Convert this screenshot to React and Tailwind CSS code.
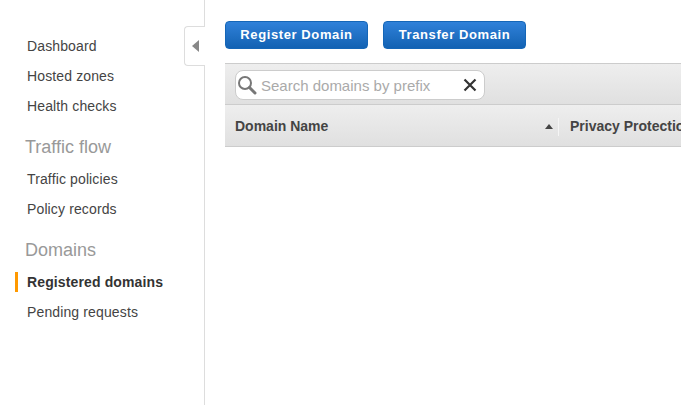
const NAV_TOP = ['Dashboard', 'Hosted zones', 'Health checks'];
const NAV_FLOW = ['Traffic policies', 'Policy records'];

function NavItem({ label, active }) {
  if (active) {
    return (
      <div className="h-[30px] flex items-center">
        <div className="w-[3px] h-[20px] bg-[#f90] ml-[15px] mr-[9px]" />
        <span className="font-bold text-[#333] tracking-[0.13px]">{label}</span>
      </div>
    );
  }
  return <div className="h-[30px] flex items-center pl-[27px] text-[#444] tracking-[0.13px]">{label}</div>;
}

function SectionTitle({ children }) {
  return <div className="h-[30px] flex items-center pl-[25px] text-[18px] text-[#999]">{children}</div>;
}

function DomainButton({ children }) {
  return (
    <button className="w-[143px] h-[28px] rounded-[4px] border border-[#1566b7] bg-gradient-to-b from-[#2f81d9] to-[#1262b3] text-white font-bold text-[13px] tracking-[0.6px] flex items-center justify-center">
      {children}
    </button>
  );
}

export default function App() {
  return (
    <div className="relative flex w-[681px] h-[405px] overflow-hidden bg-white text-[14px] font-['Liberation_Sans',Arial,sans-serif]">
      {/* Sidebar */}
      <div className="w-[205px] shrink-0 border-r border-[#ddd] pt-[31px]">
        {NAV_TOP.map(n => <NavItem key={n} label={n} />)}
        <div className="mt-[11px]">
          <SectionTitle>Traffic flow</SectionTitle>
        </div>
        <div className="mt-[2px]">
          {NAV_FLOW.map(n => <NavItem key={n} label={n} />)}
        </div>
        <div className="mt-[11px]">
          <SectionTitle>Domains</SectionTitle>
        </div>
        <div className="mt-[2px]">
          <NavItem label="Registered domains" active />
          <NavItem label="Pending requests" />
        </div>
      </div>

      {/* Collapse tab */}
      <div className="absolute left-[184px] top-[26px] w-[21px] h-[40px] bg-white border border-r-0 border-[#ddd] rounded-l-[4px] flex items-center justify-center">
        <svg width="7" height="12" viewBox="0 0 7 12" className="ml-[1px]"><path d="M7 0v12L0 6z" fill="#888" /></svg>
      </div>

      {/* Main */}
      <div className="flex-1 min-w-0 pl-[20px] pt-[21px]">
        <div className="flex gap-[15px]">
          <DomainButton>Register Domain</DomainButton>
          <DomainButton>Transfer Domain</DomainButton>
        </div>

        <div className="mt-[14px] h-[42px] border-t border-b border-[#ccc] bg-gradient-to-b from-[#eeeeee] to-[#e0e0e0] pl-[10px] pt-[6px]">
          <div className="w-[250px] h-[30px] bg-white border border-[#ccc] rounded-[8px] flex items-center">
            <svg width="20" height="20" viewBox="0 0 20 20" className="ml-[1px] shrink-0">
              <circle cx="8" cy="8" r="6" fill="none" stroke="#777" strokeWidth="2" />
              <path d="M12.5 12.5L18 18" stroke="#777" strokeWidth="3" strokeLinecap="round" />
            </svg>
            <span className="ml-[4px] pt-[2px] flex-1 text-[#aaa] text-[15px]">Search domains by prefix</span>
            <svg width="14" height="14" viewBox="0 0 14 14" className="mr-[7px] shrink-0">
              <path d="M1.5 1.5l11 11M12.5 1.5l-11 11" stroke="#333" strokeWidth="2.2" />
            </svg>
          </div>
        </div>

        <div className="h-[42px] border-b border-[#ccc] bg-gradient-to-b from-[#eeeeee] to-[#e0e0e0] pt-[2px] flex items-center font-bold text-[#444] whitespace-nowrap overflow-hidden">
          <div className="w-[334px] shrink-0 pl-[10px] flex items-center h-[18px] relative border-r border-[#f5f5f5]">
            Domain Name
            <svg width="8" height="5" viewBox="0 0 8 5" className="absolute right-[5px] top-[6px]"><path d="M0 5h8L4 0z" fill="#444" /></svg>
          </div>
          <div className="pl-[11px]">Privacy Protection</div>
        </div>
      </div>
    </div>
  );
}
